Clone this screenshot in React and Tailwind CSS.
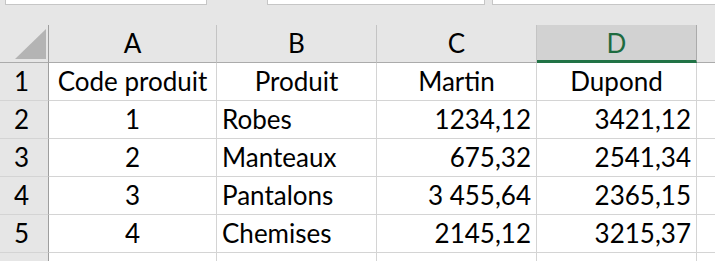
const COLUMNS = ["A", "B", "C", "D"];

const ROWS = [
  { n: 1, cells: ["Code produit", "Produit", "Martin", "Dupond"], header: true },
  { n: 2, cells: ["1", "Robes", "1234,12", "3421,12"] },
  { n: 3, cells: ["2", "Manteaux", "675,32", "2541,34"] },
  { n: 4, cells: ["3", "Pantalons", "3 455,64", "2365,15"] },
  { n: 5, cells: ["4", "Chemises", "2145,12", "3215,37"] },
];

function alignFor(row, col) {
  if (row.header) return "justify-center";
  if (col === 0) return "justify-center";
  if (col === 1) return "justify-start pl-[5px]";
  return "justify-end pr-[5px]";
}

export default function App() {
  return (
    <div
      className="h-[261px] w-[715px] overflow-hidden bg-[#e6e6e6] text-black"
      style={{ fontFamily: "Lato, 'Open Sans', sans-serif" }}
    >
      {/* formula bar remnants */}
      <div className="flex h-[25px] items-start">
        <div className="w-[5px]" />
        <div className="h-[5px] w-[202px] border border-t-0 border-[#c6c6c6] bg-white" />
        <div className="w-[60px]" />
        <div className="h-[5px] w-[218px] border border-t-0 border-[#c6c6c6] bg-white" />
        <div className="w-[7px]" />
        <div className="h-[5px] flex-1 border border-t-0 border-r-0 border-[#c6c6c6] bg-white" />
      </div>

      <div className="grid grid-cols-[49px_168px_160px_160px_160px_1fr] text-[26px] leading-none">
        {/* column headers */}
        <div className="relative h-[38px] border-r border-b border-r-[#9e9e9e] border-b-[#ababab]">
          <svg
            className="absolute left-[15px] top-[4px]"
            width="31"
            height="30"
            viewBox="0 0 31 30"
          >
            <polygon points="31,0 31,30 0,30" fill="#b4b4b4" />
          </svg>
        </div>
        {COLUMNS.map((c) =>
          c === "D" ? (
            <div
              key={c}
              className="flex h-[38px] items-end justify-center border-r border-b-[3px] border-r-[#ababab] border-b-[#217346] bg-[#d2d2d2] pb-[4px] text-[#1e6b3f]"
            >
              {c}
            </div>
          ) : (
            <div
              key={c}
              className="flex h-[38px] items-end justify-center border-r border-b border-r-[#c4c4c4] border-b-[#ababab] pb-[6px]"
            >
              {c}
            </div>
          )
        )}
        <div className="h-[38px] border-b border-b-[#ababab]" />

        {/* body */}
        {ROWS.map((row) => (
          <div key={row.n} className="contents">
            <div className="flex h-[38px] items-end justify-center border-r border-b border-r-[#9e9e9e] border-b-[#d4d4d4] pr-[5px] pb-[6px]">
              {row.n}
            </div>
            {row.cells.map((text, i) => (
              <div
                key={i}
                className={`flex h-[38px] items-end whitespace-nowrap border-r border-b border-[#d4d4d4] bg-white pb-[6px] ${alignFor(row, i)}`}
              >
                {text}
              </div>
            ))}
            <div className="h-[38px] border-b border-[#d4d4d4] bg-white" />
          </div>
        ))}

        {/* row 6, cut off */}
        <div className="h-[20px] border-r border-r-[#9e9e9e]" />
        {COLUMNS.map((c) => (
          <div key={c} className="h-[20px] border-r border-[#d4d4d4] bg-white" />
        ))}
        <div className="h-[20px] bg-white" />
      </div>
    </div>
  );
}
